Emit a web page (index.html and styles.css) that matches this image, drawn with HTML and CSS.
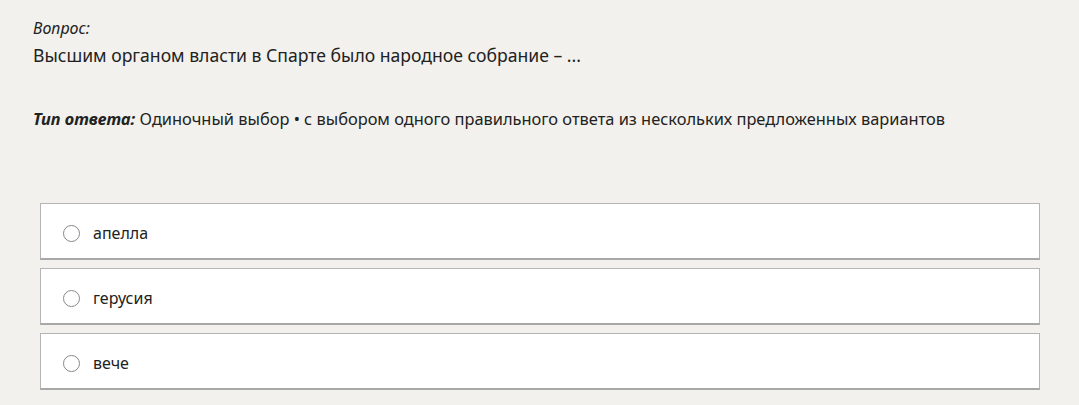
FILE: index.html
```html
<!DOCTYPE html>
<html lang="ru">
<head>
  <meta charset="UTF-8">
  <title>Вопрос</title>
  <link rel="stylesheet" href="styles.css">
</head>
<body>
  <div class="question">
    <div class="question-label">Вопрос:</div>
    <div class="question-text">Высшим органом власти в Спарте было народное собрание – ...</div>
  </div>

  <div class="answer-type">
    <span class="answer-type-label">Тип ответа:</span> Одиночный выбор • с выбором одного правильного ответа из нескольких предложенных вариантов
  </div>

  <div class="options">
    <label class="option">
      <span class="radio"></span>
      <span class="option-text">апелла</span>
    </label>
    <label class="option">
      <span class="radio"></span>
      <span class="option-text">герусия</span>
    </label>
    <label class="option">
      <span class="radio"></span>
      <span class="option-text">вече</span>
    </label>
  </div>
</body>
</html>
```

FILE: styles.css
```css
body {
  font-family: "Noto Sans", "Open Sans", sans-serif;
  background-color: #f2f1ed;
  color: #222;
  margin: 0;
  padding: 17px 39px 0 33px;
}
.question-label {
  font-style: italic;
  font-size: 16px;
  line-height: 22px;
}
.question-text {
  font-size: 17.6px;
  line-height: 32px;
}
.answer-type {
  margin-top: 36px;
  font-size: 16.4px;
  line-height: 24px;
}
.answer-type-label {
  font-style: italic;
  font-weight: bold;
}
.options {
  margin-top: 72px;
  margin-left: 7px;
  display: flex;
  flex-direction: column;
  gap: 8px;
}
.option {
  display: flex;
  align-items: center;
  background-color: #fff;
  border: 1px solid #b5b5b5;
  border-bottom: 2px solid #a8a8a8;
  box-sizing: border-box;
  height: 57px;
  padding: 4px 0 0 22px;
  cursor: pointer;
}
.radio {
  width: 17px;
  height: 17px;
  border: 1px solid #888;
  border-radius: 50%;
  box-sizing: border-box;
  margin-right: 13px;
}
.option-text {
  font-size: 16px;
}
```
